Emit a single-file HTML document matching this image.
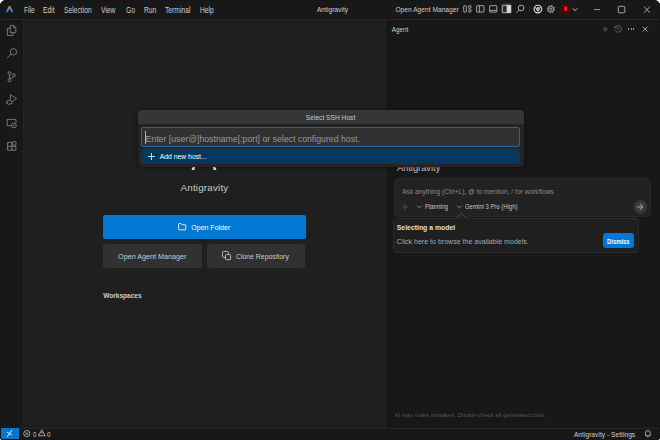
<!DOCTYPE html>
<html><head><meta charset="utf-8">
<style>
*{margin:0;padding:0;box-sizing:border-box}
html,body{width:660px;height:440px;overflow:hidden;background:#ffffff;font-family:"Liberation Sans",sans-serif}
.win{position:absolute;left:0;top:0;width:660px;height:440px;background:#181818;border-radius:6px 6px 3px 3px;overflow:hidden}
.frame{position:absolute;left:0;top:0;width:660px;height:440px;border:1px solid #14161a;border-radius:6px 6px 3px 3px;z-index:50;pointer-events:none}
.t{position:absolute;white-space:nowrap;line-height:1}
#title{position:absolute;left:0;top:0;width:660px;height:20px;background:#181818;border-bottom:1px solid #262626}
.menu{font-size:8.2px;color:#cccccc;top:6.75px;transform:scaleX(0.82);transform-origin:0 0}
.ttl{font-size:6.7px;color:#cccccc;top:6.9px}
#act{position:absolute;left:0;top:20px;width:24px;height:408px;background:#181818;border-right:1px solid #242424}
#editor{position:absolute;left:24px;top:20px;width:361px;height:408px;background:#1f1f1f}
#panel{position:absolute;left:385px;top:20px;width:275px;height:408px;background:#181818;border-left:1px solid #242424}
#status{position:absolute;left:0;top:428px;width:660px;height:12px;background:#181818;border-top:1px solid #262626}
svg{position:absolute;overflow:visible}
.btn{position:absolute;border-radius:2px}
</style></head><body>
<div class="win">
 <div id="title">
  <svg style="left:0;top:0" width="20" height="20">
   <defs>
    <linearGradient id="lgL" gradientUnits="userSpaceOnUse" x1="9.6" y1="5.8" x2="6.5" y2="12"><stop offset="0" stop-color="#e0a040"/><stop offset="0.35" stop-color="#3fae5a"/><stop offset="0.6" stop-color="#3b8ee8"/><stop offset="1" stop-color="#3a7ae0"/></linearGradient>
    <linearGradient id="lgR" gradientUnits="userSpaceOnUse" x1="9.6" y1="5.8" x2="12.6" y2="12"><stop offset="0" stop-color="#e0a040"/><stop offset="0.35" stop-color="#e05050"/><stop offset="0.6" stop-color="#4a8ee8"/><stop offset="1" stop-color="#3a7ae0"/></linearGradient>
   </defs>
   <path d="M7.1 11.4 Q8.5 8.8 9.6 7" fill="none" stroke="url(#lgL)" stroke-width="1.85" stroke-linecap="round"/>
   <path d="M12.2 11.4 Q10.8 8.8 9.6 7" fill="none" stroke="url(#lgR)" stroke-width="1.85" stroke-linecap="round"/>
  </svg>
  <div class="t menu" style="left:23.6px">File</div>
  <div class="t menu" style="left:43.3px">Edit</div>
  <div class="t menu" style="left:63.9px">Selection</div>
  <div class="t menu" style="left:101.2px">View</div>
  <div class="t menu" style="left:125.5px">Go</div>
  <div class="t menu" style="left:143.6px">Run</div>
  <div class="t menu" style="left:164.5px">Terminal</div>
  <div class="t menu" style="left:199.7px">Help</div>
  <div class="t ttl" style="left:316.9px;font-size:6.7px">Antigravity</div>
  <div class="t ttl" style="left:395.4px;font-size:6.66px">Open Agent Manager</div>
  <!-- layout icons -->
  <div class="btn" style="left:500.9px;top:3.3px;width:10.8px;height:11.2px;background:#2c2c2c;border-radius:2.5px"></div>
  <svg style="left:0;top:0" width="660" height="20" fill="none" stroke="#cccccc" stroke-width="0.8">
   <rect x="463.7" y="5.7" width="2.6" height="6.4" rx="0.5" stroke-width="0.75"/><rect x="468.6" y="5.7" width="2.4" height="2.6" rx="0.5" stroke-width="0.75"/><rect x="468.6" y="9.8" width="2.4" height="2.3" rx="0.5" stroke-width="0.75"/>
   <rect x="476.6" y="5.7" width="7.3" height="6.4" rx="0.4" stroke-width="0.75"/><line x1="479.4" y1="5.7" x2="479.4" y2="12.1" stroke-width="0.75"/>
   <rect x="489.6" y="5.7" width="7.2" height="6.4" rx="0.4" stroke-width="0.75"/><line x1="489.6" y1="10.4" x2="496.8" y2="10.4" stroke-width="0.75"/>
   <rect x="502.3" y="5.3" width="8.4" height="7.3" rx="0.6"/><rect x="507" y="5.3" width="3.7" height="7.3" fill="#dddddd"/>
   <circle cx="521.1" cy="7.95" r="2.85"/><line x1="519" y1="10.1" x2="516.3" y2="12.9"/>
   <circle cx="537.9" cy="9.1" r="3.85" stroke-width="1.1" stroke="#e0e0e0"/><circle cx="537.9" cy="9.1" r="1.5" fill="#909090" stroke="#e0e0e0"/><path d="M537.9 7.7 H541.6 M536.7 9.8 L534.8 6.5 M539.1 9.8 L537.2 13"/>
   <circle cx="550.9" cy="9.1" r="3.6" stroke-width="1" stroke-dasharray="1.2 1.63"/><circle cx="550.9" cy="9.1" r="2.8" stroke-width="0.7"/><circle cx="550.9" cy="9.1" r="1.15" stroke-width="0.75"/>
   <path d="M572.5 8.4 L575 10.7 L577.5 8.4"/>
   <path d="M594 9.6 H600" stroke="#aaaaaa"/>
   <rect x="618.3" y="6.3" width="6.5" height="6.5" rx="1"/>
   <path d="M643.9 6.6 L650 12.7 M650 6.6 L643.9 12.7"/>
  </svg>
  <div style="position:absolute;left:529px;top:6px;width:0.8px;height:7px;background:#333333"></div>
  <svg style="left:0;top:0" width="660" height="20">
   <circle cx="565.6" cy="9.1" r="4.5" fill="#150000"/><circle cx="565.6" cy="9.1" r="4.1" fill="none" stroke="#c00000" stroke-width="0.8"/><path d="M563.6 7.4 Q565.6 5.2 567.6 7.4 L567.4 10 L565.6 12 L563.8 10z" fill="#ff1010"/>
  </svg>
 </div>
 <div id="act"></div>
 <svg style="left:0;top:0;z-index:5" width="30" height="160" fill="none" stroke="#868686" stroke-width="0.85" stroke-linejoin="round">
  <!-- explorer -->
  <path d="M10.3 25.4 H13.6 L15.8 27.6 V32.6 H10.3 Z"/><path d="M13.6 25.4 V27.6 H15.8"/>
  <path d="M10.3 28.3 H7.4 V35.4 H12.9 V32.6"/>
  <!-- search -->
  <circle cx="13.4" cy="51.8" r="3.2"/><path d="M11.1 54.1 L7.4 57.8" stroke-linecap="round"/>
  <!-- scm -->
  <circle cx="9.5" cy="73.1" r="1.45"/><circle cx="9.5" cy="80.3" r="1.45"/><circle cx="13.9" cy="75.2" r="1.45"/>
  <path d="M9.5 74.6 V78.8"/><path d="M13.6 76.6 Q13 78 9.8 78.5"/>
  <!-- run debug -->
  <path d="M10.4 99.6 V94.6 L16.6 98.6 L12.4 101.4"/>
  <rect x="7" y="100.4" width="4.6" height="3.8" rx="1.6"/><path d="M6.2 101.6 H7 M6.2 103.4 H7 M11.6 101.6 H12.4 M11.6 103.4 H12.4"/>
  <!-- remote explorer -->
  <path d="M11.2 125.7 H7.2 V119.4 H16 V123"/><circle cx="13.9" cy="125.4" r="2.4"/><path d="M12.9 126.2 L14.9 124.6"/>
  <!-- extensions -->
  <path d="M7.6 142.4 H11.8 V150.2 H7.6 Z M7.6 146.3 H15.9 V150.2 H11.8"/><rect x="12.6" y="141.6" width="3.4" height="3.6" rx="0.5"/>
 </svg>
 <div id="editor">
 </div>
 <div id="panel">
 </div>
 <div id="status"></div>

 <!-- ===== editor content ===== -->
 <div class="t" style="left:180.5px;top:183.4px;font-size:9.8px;letter-spacing:0.2px;color:#cccccc">Antigravity</div>
 <div class="btn" style="left:103px;top:214.5px;width:202.5px;height:24.7px;background:#0078d4"></div>
 <svg style="left:0;top:0" width="660" height="440" fill="none" stroke="#ffffff" stroke-width="0.85" stroke-linejoin="round">
  <path d="M178.6 229.3 V224.1 Q178.6 223.6 179.1 223.6 H181 L182.2 224.8 H185.3 Q185.8 224.8 185.8 225.3 V229.3 Q185.8 229.8 185.3 229.8 H179.1 Q178.6 229.8 178.6 229.3z"/>
 </svg>
 <div class="t" style="left:191.3px;top:224.1px;font-size:7px;color:#ffffff">Open Folder</div>
 <div class="btn" style="left:103px;top:243.7px;width:98.7px;height:24px;background:#313131"></div>
 <div class="btn" style="left:206.6px;top:243.7px;width:98.9px;height:24px;background:#313131"></div>
 <div class="t" style="left:118.1px;top:253.2px;font-size:7.2px;color:#cccccc">Open Agent Manager</div>
 <svg style="left:0;top:0" width="660" height="440" fill="none" stroke="#cccccc" stroke-width="0.85">
  <rect x="225.5" y="254.6" width="5.1" height="5.1" rx="0.7"/><path d="M225.5 257.4 H223.5 Q222.5 257.4 222.5 256.4 V252.4 Q222.5 251.4 223.5 251.4 H227.4 Q228.4 251.4 228.4 252.4 V254.6"/>
 </svg>
 <div class="t" style="left:235.9px;top:253.5px;font-size:6.92px;color:#cccccc">Clone Repository</div>
 <div class="t" style="left:103.2px;top:292.6px;font-size:6.56px;font-weight:bold;color:#cccccc">Workspaces</div>

 <!-- ===== panel content ===== -->
 <div class="t" style="left:391.8px;top:26.7px;font-size:6.3px;color:#cccccc">Agent</div>
 <svg style="left:601.5px;top:25.5px" width="7" height="7" viewBox="0 0 7 7" fill="none" stroke="#4c4c4c" stroke-width="1.3">
  <path d="M3.3 0.6 V5.8 M0.7 3.2 H5.9"/>
 </svg>
 <svg style="left:614px;top:24.5px" width="8" height="8" viewBox="0 0 8 8" fill="none" stroke="#6e6e6e" stroke-width="0.8">
  <path d="M1.3 2.2 A3.3 3.3 0 1 1 0.9 4.6"/><path d="M0.8 0.8 V2.6 H2.6"/><path d="M4 2.2 V4.2 L5.3 5"/>
 </svg>
 <div style="position:absolute;left:628px;top:28.3px;width:1.3px;height:1.3px;background:#a0a0a0;border-radius:0.3px"></div>
 <div style="position:absolute;left:630.5px;top:28.3px;width:1.3px;height:1.3px;background:#a0a0a0;border-radius:0.3px"></div>
 <div style="position:absolute;left:633px;top:28.3px;width:1.3px;height:1.3px;background:#a0a0a0;border-radius:0.3px"></div>
 <svg style="left:641.5px;top:25.8px" width="6" height="6" viewBox="0 0 6 6" fill="none" stroke="#c4c4c4" stroke-width="0.8">
  <path d="M0.7 0.7 L5.6 5.6 M5.6 0.7 L0.7 5.6"/>
 </svg>
 <div class="t" style="left:396.9px;top:163.6px;font-size:9.3px;color:#cccccc">Antigravity</div>
 <div style="position:absolute;left:394px;top:178px;width:256.5px;height:39px;background:#222222;border:1px solid #292929;border-radius:5px"></div>
 <div class="t" style="left:402.2px;top:188.8px;font-size:6.65px;color:#8a8a8a">Ask anything (Ctrl+L), @ to mention, / for workflows</div>
 <svg style="left:401.8px;top:204.3px" width="6" height="6" viewBox="0 0 6 6" fill="none" stroke="#555555" stroke-width="0.8">
  <path d="M3 0 V6 M0 3 H6"/>
 </svg>
 <svg style="left:416.5px;top:204.8px" width="5" height="4" viewBox="0 0 5 4" fill="none" stroke="#aaaaaa" stroke-width="0.7">
  <path d="M0.5 0.8 L2.5 2.8 L4.5 0.8"/>
 </svg>
 <div class="t" style="left:424.6px;top:204.4px;font-size:6.6px;transform:scaleX(0.9);transform-origin:0 0;color:#c4c4c4">Planning</div>
 <svg style="left:456.8px;top:204.8px" width="5" height="4" viewBox="0 0 5 4" fill="none" stroke="#aaaaaa" stroke-width="0.7">
  <path d="M0.5 0.8 L2.5 2.8 L4.5 0.8"/>
 </svg>
 <div class="t" style="left:465.3px;top:204.4px;font-size:6.6px;transform:scaleX(0.9);transform-origin:0 0;color:#c4c4c4">Gemini 3 Pro (High)</div>
 <div style="position:absolute;left:633.6px;top:200.2px;width:13.4px;height:13.4px;background:#38393c;border-radius:50%"></div>
 <svg style="left:0;top:0" width="660" height="440" fill="none" stroke="#8f8f8f" stroke-width="1.1" stroke-linecap="round" stroke-linejoin="round">
  <path d="M637.2 206.9 H642.8 M640.2 204.2 L642.9 206.9 L640.2 209.6"/>
 </svg>
 <!-- tooltip -->
 <div style="position:absolute;left:392.5px;top:218px;width:246px;height:35px;background:#1f1f1f;border:1px solid #2b2b2b;border-radius:3px"></div>
 <svg style="left:0;top:0" width="660" height="440">
  <path d="M456.4 218.6 L461.6 213.4 L466.8 218.6" fill="#1f1f1f" stroke="#585858" stroke-width="0.85"/>
 </svg>
 <div class="t" style="left:396.8px;top:225.3px;font-size:6.87px;font-weight:bold;color:#e0e0e0">Selecting a model</div>
 <div class="t" style="left:396.8px;top:237.9px;font-size:7.06px;color:#a9a9a9">Click here to browse the available models.</div>
 <div class="btn" style="left:602.6px;top:233.4px;width:31.3px;height:14.3px;background:#0078d4;border-radius:3px"></div>
 <div class="t" style="left:606.9px;top:237.95px;font-size:7px;font-weight:bold;color:#ffffff;transform:scaleX(0.84);transform-origin:0 0">Dismiss</div>
 <div class="t" style="left:394.4px;top:413px;font-size:5.94px;color:#565656">AI may make mistakes. Double-check all generated code.</div>

 <!-- ===== status bar ===== -->
 <div style="position:absolute;left:1px;top:428.2px;width:18px;height:11.8px;background:#0078d4;border-bottom-left-radius:2px"></div>
 <svg style="left:0;top:0" width="20" height="440" fill="none" stroke="#ffffff" stroke-width="0.8" stroke-linecap="round">
  <path d="M7.3 436.7 L11.7 430.4 M7.2 432.3 L11.6 434.7" stroke-width="0.9"/>
 </svg>
 <svg style="left:22.9px;top:430px" width="8" height="8" viewBox="0 0 8 8" fill="none" stroke="#cccccc" stroke-width="0.8">
  <circle cx="3.8" cy="3.6" r="3.1"/><path d="M2.5 2.3 L5.1 4.9 M5.1 2.3 L2.5 4.9"/>
 </svg>
 <div class="t" style="left:32.6px;top:430.6px;font-size:7.2px;transform:scaleX(0.85);transform-origin:left;color:#cccccc">0</div>
 <svg style="left:38px;top:429.2px" width="8" height="8" viewBox="0 0 8 8" fill="none" stroke="#cccccc" stroke-width="0.8">
  <path d="M3.8 0.8 L7.2 6.8 H0.4z M3.8 3 V4.8"/>
 </svg>
 <div class="t" style="left:47.3px;top:430.6px;font-size:7.2px;transform:scaleX(0.85);transform-origin:left;color:#cccccc">0</div>
 <div class="t" style="left:573.9px;top:431.6px;font-size:6.7px;color:#cccccc">Antigravity - Settings</div>
 <svg style="left:0;top:0" width="660" height="440" fill="none" stroke="#cccccc" stroke-width="0.8" stroke-linejoin="round">
  <path d="M645.6 435.8 V432.8 Q645.6 430.5 647.9 430.5 Q650.2 430.5 650.2 432.8 V435.8 Z"/><path d="M647.2 436.9 H648.6"/>
 </svg>

 <div style="position:absolute;left:191.5px;top:166.8px;width:2.6px;height:2.5px;background:#e8e8e8;border-radius:1px 1px 0.5px 1px;transform:skewX(-20deg)"></div>
 <div style="position:absolute;left:213.3px;top:166.8px;width:2.6px;height:2.5px;background:#e8e8e8;border-radius:1px 1px 1px 0.5px;transform:skewX(20deg)"></div>
 <!-- ===== quick input dialog ===== -->
 <div style="position:absolute;left:138px;top:110px;width:385.5px;height:57px;background:#242424;border-radius:4px;box-shadow:0 0 5px rgba(0,0,0,0.45);overflow:hidden">
  <div style="position:absolute;left:0;top:0;width:386px;height:13.5px;background:#363636"></div>
 </div>
 <div class="t" style="left:305.8px;top:114.5px;font-size:6.65px;color:#cccccc">Select SSH Host</div>
 <div style="position:absolute;left:141px;top:127px;width:379px;height:20px;background:#313131;border:1px solid #2564a0;border-radius:2px"></div>
 <div style="position:absolute;left:144.5px;top:131px;width:0.8px;height:13px;background:#aeafad"></div>
 <div class="t" style="left:145.5px;top:134.7px;font-size:8.72px;color:#989898">Enter [user@]hostname[:port] or select configured host.</div>
 <div style="position:absolute;left:141px;top:149px;width:378.5px;height:15.3px;background:#04395e;border-radius:2px"></div>
 <svg style="left:148px;top:153.3px" width="7" height="7" viewBox="0 0 7 7" fill="none" stroke="#ffffff" stroke-width="0.8">
  <path d="M3.5 0 V7 M0 3.5 H7"/>
 </svg>
 <div class="t" style="left:159.7px;top:154.1px;font-size:6.82px;color:#ffffff">Add new host...</div>
</div>
<div class="frame"></div>
</body></html>
